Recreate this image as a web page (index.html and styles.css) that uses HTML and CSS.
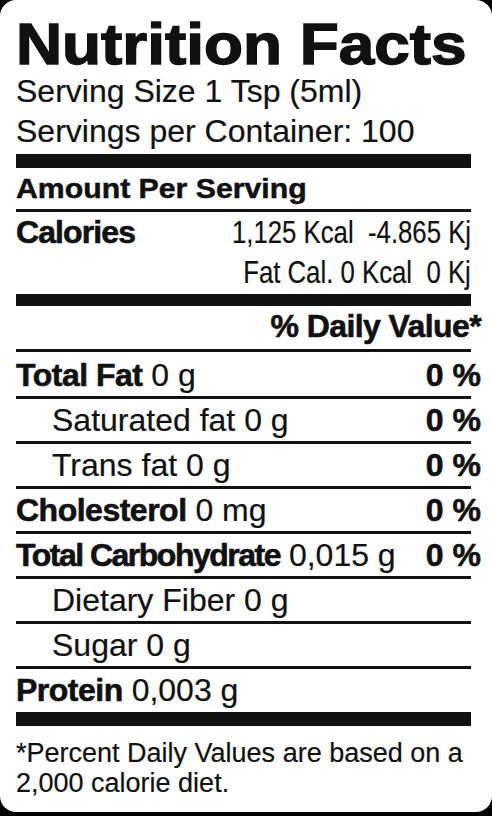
FILE: index.html
```html
<!DOCTYPE html>
<html lang="en">
  <head>
    <meta charset="UTF-8" />
    <meta name="viewport" content="width=device-width, initial-scale=1.0" />
    <title>Nutrition Facts</title>
    <link rel="stylesheet" href="styles.css">
  </head>
  <body>
    <div class="label">
      <h1 class="title"><span>Nutrition Facts</span></h1>
      <p class="serving">Serving Size 1 Tsp (5ml)</p>
      <p class="serving">Servings per Container: 100</p>

      <div class="bar bar-top"></div>

      <div class="amount"><span>Amount Per Serving</span></div>

      <div class="calories">
        <b>Calories</b>
        <div class="energy">
          <span>1,125 Kcal&nbsp; -4.865 Kj</span>
          <span>Fat Cal. 0 Kcal&nbsp; 0 Kj</span>
        </div>
      </div>

      <div class="bar bar-mid"></div>

      <div class="dv-head"><span>% Daily Value*</span></div>

      <div class="row first">
        <span class="name"><b>Total Fat</b> 0 g</span>
        <b class="dv">0 %</b>
      </div>
      <div class="row sub">
        <span class="name">Saturated fat 0 g</span>
        <b class="dv">0 %</b>
      </div>
      <div class="row sub">
        <span class="name">Trans fat 0 g</span>
        <b class="dv">0 %</b>
      </div>
      <div class="row">
        <span class="name"><b>Cholesterol</b> 0 mg</span>
        <b class="dv">0 %</b>
      </div>
      <div class="row">
        <span class="name"><b class="tight">Total Carbohydrate</b> 0,015 g</span>
        <b class="dv">0 %</b>
      </div>
      <div class="row sub">
        <span class="name">Dietary Fiber 0 g</span>
      </div>
      <div class="row sub">
        <span class="name">Sugar 0 g</span>
      </div>
      <div class="row last">
        <span class="name"><b>Protein</b> 0,003 g</span>
      </div>

      <div class="bar bar-bottom"></div>

      <p class="note">*Percent Daily Values are based on a<br>2,000 calorie diet.</p>
    </div>
  </body>
</html>
```

FILE: styles.css
```css
body {
  margin: 0;
  background-color: #000;
  font-family: "Liberation Sans", Arial, sans-serif;
  color: #111;
}

.label {
  box-sizing: border-box;
  height: 812px;
  background-color: #fff;
  border-radius: 16px;
  padding: 17px 21px 0 16px;
}

.title {
  margin: 0;
  font-size: 57px;
  line-height: 54px;
  font-weight: bold;
  -webkit-text-stroke: 1.4px #111;
}

.title span {
  display: inline-block;
  transform: scaleX(1.12);
  transform-origin: left;
}

.serving {
  margin: 0;
  font-size: 32px;
  line-height: 40px;
  -webkit-text-stroke: 0.2px #111;
}

.bar {
  background-color: #111;
}

.bar-top {
  height: 14px;
  margin-top: 3px;
}

.bar-mid {
  height: 12px;
  margin-top: 2px;
}

.bar-bottom {
  height: 14px;
}

b {
  letter-spacing: -0.5px;
  -webkit-text-stroke: 0.6px #111;
}

.amount {
  font-size: 28px;
  line-height: 30px;
  font-weight: bold;
  padding: 6px 0 5px;
  border-bottom: 3px solid #111;
  -webkit-text-stroke: 0.5px #111;
}

.amount span {
  display: inline-block;
  transform: scaleX(1.08);
  transform-origin: left;
}

.calories {
  display: flex;
  justify-content: space-between;
  font-size: 32px;
  line-height: 40px;
}

.calories b {
  letter-spacing: -0.9px;
}

.energy {
  display: flex;
  flex-direction: column;
  align-items: flex-end;
  -webkit-text-stroke: 0.2px #111;
}

.energy span {
  transform: scaleX(0.805);
  transform-origin: right;
  white-space: nowrap;
}

.dv-head {
  text-align: right;
  font-size: 32px;
  line-height: 40px;
  font-weight: bold;
  letter-spacing: -0.6px;
  -webkit-text-stroke: 0.6px #111;
  padding-bottom: 3px;
  border-bottom: 3px solid #111;
}

.dv-head span {
  display: inline-block;
  margin-right: -10px;
}

.row {
  display: flex;
  justify-content: space-between;
  font-size: 32px;
  line-height: 42px;
  border-bottom: 3px solid #111;
  white-space: nowrap;
}

.row .name {
  -webkit-text-stroke: 0.2px #111;
}

.row .name b {
  -webkit-text-stroke: 0.6px #111;
}

.row.first {
  padding-top: 2px;
}

.row.sub .name {
  padding-left: 36px;
}

.row.last {
  border-bottom: none;
  padding-bottom: 1px;
}

.tight {
  letter-spacing: -1.5px;
}

.dv {
  margin-right: -10px;
  letter-spacing: 0;
}

.note {
  margin: 0;
  font-size: 27px;
  line-height: 30px;
  padding-top: 12px;
  -webkit-text-stroke: 0.2px #111;
}
```
